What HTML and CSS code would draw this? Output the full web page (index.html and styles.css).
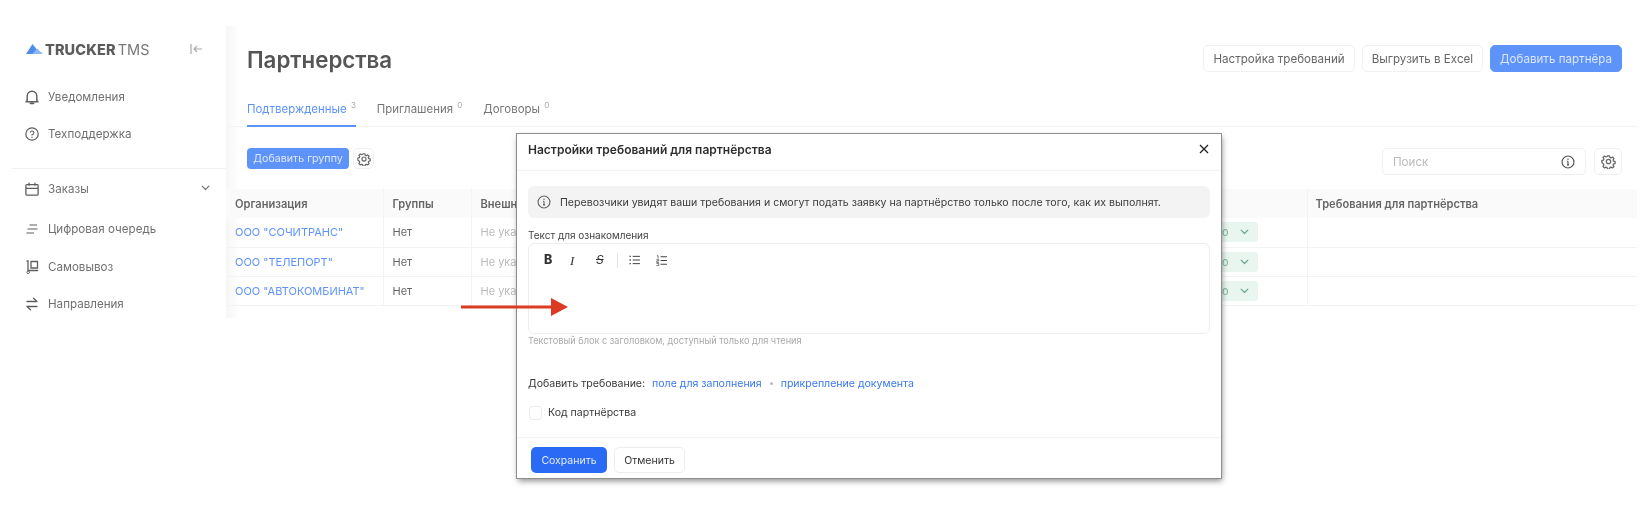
FILE: index.html
```html
<!DOCTYPE html>
<html lang="ru">
<head>
<meta charset="utf-8">
<title>Партнерства</title>
<link rel="stylesheet" href="styles.css">
</head>
<body>
<svg class="defs" width="0" height="0" aria-hidden="true">
  <symbol id="gear" viewBox="0 0 24 24"><path d="M10.3 3h3.4l.6 2.6 1.7.7 2.3-1.4 2.4 2.4-1.4 2.3.7 1.7 2.6.6v3.4l-2.6.6-.7 1.7 1.4 2.3-2.4 2.4-2.3-1.4-1.7.7-.6 2.6h-3.4l-.6-2.6-1.7-.7-2.3 1.4-2.4-2.4 1.4-2.3-.7-1.7L1.4 13.700v-3.400L4 9.700l.7-1.700L3.300 5.700l2.400-2.400L8 4.700l1.700-.7z" fill="none" stroke="currentColor" stroke-width="2" stroke-linejoin="round"/><circle cx="12" cy="12" r="3.500" fill="none" stroke="currentColor" stroke-width="2"/></symbol>
  <symbol id="chev" viewBox="0 0 12 8"><path d="M1.500 1.500 6 6l4.500-4.500" fill="none" stroke="currentColor" stroke-width="1.600" stroke-linecap="round" stroke-linejoin="round"/></symbol>
  <symbol id="info" viewBox="0 0 16 16"><circle cx="8" cy="8" r="6.800" fill="none" stroke="currentColor" stroke-width="1.300"/><path d="M8 7.200v4M6.900 7.200H8M6.800 11.300h2.400" fill="none" stroke="currentColor" stroke-width="1.300"/><circle cx="8" cy="4.800" r=".9" fill="currentColor"/></symbol>
</svg>

<div class="app">
  <aside class="sidebar">
    <div class="brand">
      <svg class="brand-mark" viewBox="0 0 17 10" width="17" height="10"><path d="M0 10 6.500 0 12 7l-2 3z" fill="#4f8cef"/><path d="M6.500 10 11 4.500 17 10z" fill="#8db6f5"/></svg>
      <span class="brand-name"><b>TRUCKER</b> TMS</span>
      <svg class="collapse" viewBox="0 0 13 12" width="13" height="12"><path d="M1 1v10M12 6H4M7 3 4 6l3 3" fill="none" stroke="currentColor" stroke-width="1.200"/></svg>
    </div>
    <nav class="nav nav-top">
      <a class="nav-item">
        <svg viewBox="0 0 14 16" width="14" height="16"><path d="M2.200 11.500V7a4.800 4.800 0 0 1 9.600 0v4.500l1.200 1.300H1zM5.300 14.500h3.400" fill="none" stroke="currentColor" stroke-width="1.400" stroke-linejoin="round" stroke-linecap="round"/></svg>
        <span>Уведомления</span>
      </a>
      <a class="nav-item">
        <svg viewBox="0 0 14 14" width="14" height="14"><circle cx="7" cy="7" r="6.200" fill="none" stroke="currentColor" stroke-width="1.200"/><path d="M5.300 5.500A1.800 1.800 0 1 1 7 7.600v.8" fill="none" stroke="currentColor" stroke-width="1.100"/><circle cx="7" cy="10.200" r=".7" fill="currentColor"/></svg>
        <span>Техподдержка</span>
      </a>
    </nav>
    <nav class="nav nav-main">
      <a class="nav-item nav-orders">
        <svg viewBox="0 0 14 14" width="14" height="14"><path d="M1.700 2.700h10.600a.8.800 0 0 1 .8.800v8.800a.8.800 0 0 1-.8.800H1.700a.8.800 0 0 1-.8-.8V3.500a.8.800 0 0 1 .8-.8zM1 6.300h12M4 .8v3M10 .8v3" fill="none" stroke="currentColor" stroke-width="1.300"/></svg>
        <span>Заказы</span>
        <svg class="nav-chev" width="9" height="6"><use href="#chev"/></svg>
      </a>
      <a class="nav-item nav-queue">
        <svg viewBox="0 0 14 12" width="14" height="12"><path d="M4.500 2h7.500M2.500 6h10M1.500 10h7.500" fill="none" stroke="currentColor" stroke-width="1.200"/></svg>
        <span>Цифровая очередь</span>
      </a>
      <a class="nav-item nav-pickup">
        <svg viewBox="0 0 14 14" width="14" height="14"><path d="M1.500 1h1.500v9.500H13M6 1.500h6.500v6.500H6z" fill="none" stroke="currentColor" stroke-width="1.300"/><circle cx="3.200" cy="12.300" r="1.300" fill="none" stroke="currentColor" stroke-width="1"/></svg>
        <span>Самовывоз</span>
      </a>
      <a class="nav-item nav-routes">
        <svg viewBox="0 0 14 14" width="14" height="14"><path d="M2 4.500h10M8.500 1.300l3.500 3.200M12 9.500H2M5.500 12.700 2 9.500" fill="none" stroke="currentColor" stroke-width="1.300" stroke-linecap="round"/></svg>
        <span>Направления</span>
      </a>
    </nav>
  </aside>

  <main class="main">
    <header class="page-head">
      <h1>Партнерства</h1>
      <div class="head-actions">
        <button class="btn">Настройка требований</button>
        <button class="btn">Выгрузить в Excel</button>
        <button class="btn btn-primary">Добавить партнёра</button>
      </div>
    </header>

    <div class="tabs">
      <a class="tab tab-active">Подтвержденные <sup>3</sup></a>
      <a class="tab">Приглашения <sup>0</sup></a>
      <a class="tab">Договоры <sup>0</sup></a>
    </div>

    <div class="toolbar">
      <button class="btn-small">Добавить группу</button>
      <button class="icon-btn icon-btn-small"><svg width="15" height="15"><use href="#gear"/></svg></button>
      <div class="toolbar-right">
        <div class="search">
          <span>Поиск</span>
          <svg width="15" height="15"><use href="#info"/></svg>
        </div>
        <button class="icon-btn"><svg width="15" height="15"><use href="#gear"/></svg></button>
      </div>
    </div>

    <table class="table">
      <thead>
        <tr>
          <th class="c-org">Организация</th>
          <th class="c-group">Группы</th>
          <th class="c-ext">Внешний код</th>
          <th class="c-status"></th>
          <th>Требования для партнёрства</th>
        </tr>
      </thead>
      <tbody>
        <tr>
          <td><a>ООО "СОЧИТРАНС"</a></td><td>Нет</td><td class="muted">Не указан</td>
          <td><span class="tag">Подтверждено <svg width="9" height="6"><use href="#chev"/></svg></span></td><td></td>
        </tr>
        <tr>
          <td><a>ООО "ТЕЛЕПОРТ"</a></td><td>Нет</td><td class="muted">Не указан</td>
          <td><span class="tag">Подтверждено <svg width="9" height="6"><use href="#chev"/></svg></span></td><td></td>
        </tr>
        <tr>
          <td><a>ООО "АВТОКОМБИНАТ"</a></td><td>Нет</td><td class="muted">Не указан</td>
          <td><span class="tag">Подтверждено <svg width="9" height="6"><use href="#chev"/></svg></span></td><td></td>
        </tr>
      </tbody>
    </table>
  </main>
</div>

<section class="modal">
  <div class="modal-head">
    <h2>Настройки требований для партнёрства</h2>
    <svg class="close" viewBox="0 0 10 10" width="10" height="10"><path d="M1 1l8 8M9 1 1 9" fill="none" stroke="#222" stroke-width="1.300"/></svg>
  </div>
  <div class="modal-body">
    <div class="notice">
      <svg width="14" height="14"><use href="#info"/></svg>
      <span>Перевозчики увидят ваши требования и смогут подать заявку на партнёрство только после того, как их выполнят.</span>
    </div>
    <div class="label">Текст для ознакомления</div>
    <div class="editor">
      <div class="editor-tools">
        <span class="tool tool-b">B</span>
        <span class="tool tool-i">I</span>
        <span class="tool tool-s">S</span>
        <span class="tool-sep"></span>
        <svg viewBox="0 0 12 11" width="11" height="10"><path d="M4 1.500h8M4 5.500h8M4 9.500h8" stroke="#444" stroke-width="1.100"/><path d="M.5 1.500h1.500M.5 5.500h1.500M.5 9.500h1.500" stroke="#444" stroke-width="1.400"/></svg>
        <svg viewBox="0 0 12 12" width="11" height="11"><path d="M5 2h7M5 6h7M5 10h7" stroke="#444" stroke-width="1.100"/><path d="M1 .8h1.200v3M.5 5h2.400v1.500H.8V8h2.400M.5 9.200h2.500v2.300H.5" fill="none" stroke="#444" stroke-width=".8"/></svg>
      </div>
    </div>
    <div class="hint">Текстовый блок с заголовком, доступный только для чтения</div>
    <div class="add-req">
      <span>Добавить требование:</span>
      <a>поле для заполнения</a>
      <i class="dot"></i>
      <a>прикрепление документа</a>
    </div>
    <label class="check"><i class="box"></i>Код партнёрства</label>
  </div>
  <div class="modal-foot">
    <button class="btn-save">Сохранить</button>
    <button class="btn-cancel">Отменить</button>
  </div>
</section>

<svg class="arrow" viewBox="0 0 107 18" width="107" height="18"><path d="M0 7.500h90V0l17 9-17 9v-7.500H0z" fill="#dc3a22"/></svg>
</body>
</html>
```
FILE: styles.css
```css
* { box-sizing: border-box; }
html, body { margin: 0; height: 514px; overflow: hidden; background: #fff; }
body { font-family: Inter, "Noto Sans", sans-serif; font-size: 12px; color: #666; position: relative; }
button { font-family: inherit; cursor: pointer; }
a { color: inherit; text-decoration: none; }
.defs { position: absolute; }

.app { display: flex; padding-top: 26px; height: 318px; filter: blur(.4px); }

.sidebar { width: 226px; flex: none; }
.brand { display: flex; align-items: center; height: 46px; padding: 0 23px 0 26px; }
.brand-mark { flex: none; }
.brand-name { margin-left: 2px; font-size: 14.500px; word-spacing: -2px; color: #777; flex: 1; white-space: nowrap; }
.brand-name b { font-weight: 800; color: #5c5c5c; letter-spacing: .1px; }
.collapse { color: #aaa; }
.nav { display: flex; flex-direction: column; }
.nav-top { padding: 6px 0 16px; border-bottom: 1px solid #f2f2f2; margin-left: 12px; }
.nav-top .nav-item { padding-left: 13px; }
.nav-top .nav-item + .nav-item { height: 36px; }
.nav-item { display: flex; align-items: center; height: 38px; padding-left: 25px; gap: 9px; font-size: 11.600px; color: #707070; }
.nav-item svg:first-child { width: 14px; flex: none; color: #5e5e5e; }
.nav-orders { height: 40px; }
.nav-queue { height: 40px; }
.nav-pickup { height: 36px; }
.nav-chev { margin-left: auto; margin-right: 16px; margin-top: -3px; color: #777; }

.main { flex: 1; padding-right: 13px; min-width: 0; background: linear-gradient(90deg, #f6f6f6, #fff 14px); }
.page-head { display: flex; justify-content: space-between; align-items: flex-start; padding: 19px 15px 0 21px; height: 68px; }
h1 { margin: 0; font-size: 22.300px; line-height: 29px; font-weight: 600; color: #555; }
.head-actions { display: flex; gap: 7px; }
.btn { height: 27px; padding: 0 9px; border: 1px solid #f0f0f0; border-radius: 5px; background: #fff; font-size: 11.600px; color: #666; }
.btn-primary { background: #5e93f9; border-color: #5e93f9; color: #dbe7ff; }

.tabs { display: flex; gap: 21px; height: 33px; padding-left: 21px; border-bottom: 1px solid #f4f4f4; }
.tab { height: 33px; padding-top: 8px; font-size: 11.450px; color: #777; white-space: nowrap; }
.tab sup { font-size: 8px; color: #aaa; vertical-align: 5px; line-height: 0; margin-left: 1px; }
.tab-active { color: #5e93f9; border-bottom: 2px solid #5e93f9; }

.toolbar { display: flex; align-items: flex-start; padding: 21px 15px 0 21px; height: 62px; }
.btn-small { height: 21px; width: 102px; padding: 0; border: 0; border-radius: 4px; background: #5e93f9; color: #dbe7ff; font-size: 10.700px; }
.icon-btn { display: flex; align-items: center; justify-content: center; width: 28px; height: 27px; padding: 0; margin-left: 8px; border: 1px solid #f0f0f0; border-radius: 5px; background: #fff; color: #666; }
.icon-btn-small { width: 21px; height: 21px; margin-left: 4px; }
.icon-btn-small svg { width: 14px; height: 14px; }
.toolbar-right { display: flex; margin-left: auto; }
.search { display: flex; align-items: center; justify-content: space-between; width: 204px; height: 27px; padding: 0 10px; border: 1px solid #f0f0f0; border-radius: 5px; font-size: 11.600px; color: #bbb; }
.search svg { color: #555; width: 14px; height: 14px; }

.table { width: 100%; border-collapse: collapse; table-layout: fixed; }
.table th { height: 29px; padding: 0 9px; text-align: left; font-weight: 600; color: #666; background: #fafafa; border-right: 1px solid #f3f3f3; font-size: 11.100px; }
.table th:last-child { border-right: 0; padding-left: 8px; }
.table td:last-child { border-right: 0; }
.table td { height: 29px; padding: 0 9px; color: #666; border-bottom: 1px solid #f3f3f3; border-right: 1px solid #f3f3f3; white-space: nowrap; overflow: hidden; font-size: 11px; }
.table td a { color: #5e93f9; }
.table td.muted { color: #bbb; }
.c-org { width: 157px; }
.c-group { width: 88px; }
.c-ext { width: 400px; }
.c-status { width: 436px; }
.tag { display: flex; align-items: center; justify-content: flex-end; gap: 11px; width: 140px; height: 20px; margin-left: 237px; padding: 0 9px 0 0; border-radius: 3px; background: #e9f6f0; color: #7dbb9e; font-size: 11px; }
.tag svg { color: #5fae8a; flex: none; }

.modal { position: absolute; left: 517px; top: 134px; width: 704px; height: 344px; display: flex; flex-direction: column; background: #fff; box-shadow: 0 0 0 1px #8d8d8d, 1px 3px 6px rgba(0,0,0,.45); color: #333; filter: blur(.3px); }
.modal-head { display: flex; align-items: center; justify-content: space-between; height: 37px; flex: none; padding: 0 12px 6px 11px; border-bottom: 1px solid #f3f3f3; }
h2 { margin: 0; font-size: 12px; font-weight: 600; color: #2e2e2e; }
.modal-body { flex: 1; padding: 15px 11px 0 11px; }
.notice { display: flex; align-items: center; gap: 9px; height: 32px; padding-left: 9px; border-radius: 6px; background: #f3f3f3; color: #3c3c3c; font-size: 10.600px; white-space: nowrap; }
.notice svg { color: #666; flex: none; }
.label { margin-top: 10px; height: 15px; line-height: 14px; font-size: 10px; color: #444; }
.editor { height: 91px; border: 1px solid #eeeeee; border-radius: 6px; }
.editor-tools { display: flex; align-items: center; height: 32px; padding-left: 15px; color: #333; }
.tool { width: 26px; font-size: 12px; color: #333; line-height: 1; }
.tool-b { font-weight: 800; font-size: 12.500px; }
.tool-i { font-family: "Liberation Serif", serif; font-style: italic; font-size: 13px; }
.tool-s { text-decoration: line-through; font-style: italic; width: 21px; }
.tool-sep { width: 1px; height: 15px; background: #e3e3e3; margin-right: 11px; }
.editor-tools svg { margin-right: 16px; }
.hint { margin-top: 0; font-size: 9.200px; line-height: 14px; color: #aaa; white-space: nowrap; }
.add-req { display: flex; align-items: center; gap: 7px; margin-top: 27px; height: 16px; font-size: 10.550px; color: #3a3a3a; }
.add-req a { color: #3a78f2; }
.dot { width: 3px; height: 3px; border-radius: 50%; background: #bbb; margin: 0 1px; }
.check { display: flex; align-items: center; gap: 6px; margin-top: 14px; height: 15px; margin-left: 1px; font-size: 10.550px; color: #3a3a3a; }
.box { width: 13px; height: 14px; border: 1px solid #ececec; border-radius: 3px; }
.modal-foot { display: flex; gap: 7px; flex: none; height: 41px; padding: 9px 0 0 14px; border-top: 1px solid #f3f3f3; }
.btn-save, .btn-cancel { height: 26px; padding: 0; border-radius: 5px; font-size: 10.500px; }
.btn-save { width: 76px; border: 0; background: #2a6af5; color: #e4ecff; }
.btn-cancel { width: 71px; border: 1px solid #ededed; background: #fff; color: #333; }

.arrow { position: absolute; left: 461px; top: 298px; }
```
